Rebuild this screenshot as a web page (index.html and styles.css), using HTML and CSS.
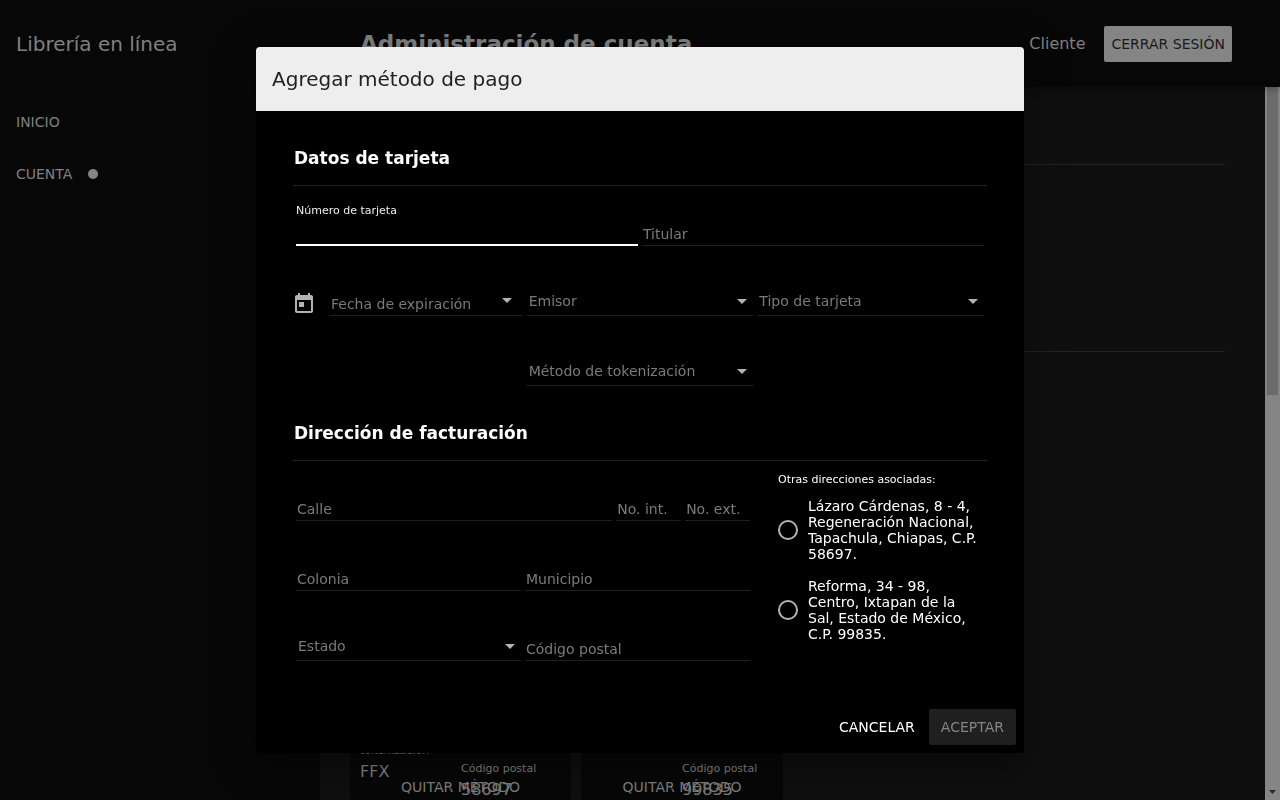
FILE: index.html
```html
<!DOCTYPE html>
<html lang="es">
<head>
<meta charset="utf-8">
<title>Librería en línea</title>
<link rel="stylesheet" href="styles.css">
</head>
<body>
<div class="app">
  <header class="topbar">
    <span class="brand">Librería en línea</span>
    <h1 class="page-title">Administración de cuenta</h1>
    <span class="role">Cliente</span>
    <button class="logout" type="button">CERRAR SESIÓN</button>
  </header>
  <div class="workspace">
    <nav class="sidebar">
      <a class="nav-link" href="#inicio">INICIO</a>
      <a class="nav-link" href="#cuenta">CUENTA <span class="dot"></span></a>
    </nav>
    <main class="content">
      <hr class="rule rule-first">
      <hr class="rule rule-second">
      <div class="cards">
        <article class="card">
          <div class="card-data">
            <div><p class="caption">tokenización</p><p class="value">FFX</p></div>
            <div class="postal"><p class="caption">Código postal</p><p class="value">58697</p></div>
          </div>
          <button class="remove" type="button">QUITAR MÉTODO</button>
        </article>
        <article class="card card-narrow">
          <div class="card-data">
            <div></div>
            <div class="postal"><p class="caption">Código postal</p><p class="value">99835</p></div>
          </div>
          <button class="remove" type="button">QUITAR MÉTODO</button>
        </article>
      </div>
    </main>
    <div class="scrollbar">
      <div class="thumb"></div>
      <svg class="scroll-arrow" width="7" height="4" viewBox="0 0 7 4"><path d="M0 0h7L3.500 4z"/></svg>
    </div>
  </div>
</div>

<div class="overlay">
  <form class="dialog" role="dialog" aria-labelledby="dialog-title">
    <h2 class="dialog-title" id="dialog-title">Agregar método de pago</h2>
    <div class="dialog-body">
      <h3 class="section-title">Datos de tarjeta</h3>
      <div class="rows">
        <div class="row halves first">
          <div class="field active"><label for="numero">Número de tarjeta</label><input id="numero" type="text"></div>
          <div class="field"><label for="titular">Titular</label><input id="titular" type="text"></div>
        </div>
        <div class="row thirds">
          <div class="date">
            <svg class="calendar" width="24" height="24" viewBox="0 0 24 24"><path d="M19 3h-1V1h-2v2H8V1H6v2H5c-1.110 0-1.990.9-1.990 2L3 19c0 1.100.890 2 2 2h14c1.100 0 2-.9 2-2V5c0-1.100-.9-2-2-2zm0 16H5V8h14v11zM7 10h5v5H7z"/></svg>
            <div class="field"><label for="fecha">Fecha de expiración</label><input id="fecha" type="text"><svg class="arrow" width="10" height="5" viewBox="0 0 10 5"><path d="M0 0h10L5 5z"/></svg></div>
          </div>
          <div class="field"><select aria-label="Emisor"><option>Emisor</option></select><svg class="arrow" width="10" height="5" viewBox="0 0 10 5"><path d="M0 0h10L5 5z"/></svg></div>
          <div class="field"><select aria-label="Tipo de tarjeta"><option>Tipo de tarjeta</option></select><svg class="arrow" width="10" height="5" viewBox="0 0 10 5"><path d="M0 0h10L5 5z"/></svg></div>
        </div>
        <div class="row thirds">
          <div class="field middle"><select aria-label="Método de tokenización"><option>Método de tokenización</option></select><svg class="arrow" width="10" height="5" viewBox="0 0 10 5"><path d="M0 0h10L5 5z"/></svg></div>
        </div>
      </div>
      <h3 class="section-title">Dirección de facturación</h3>
      <div class="billing">
        <div class="address">
          <div class="row street first">
            <div class="field"><label for="calle">Calle</label><input id="calle" type="text"></div>
            <div class="field"><label for="interior">No. int.</label><input id="interior" type="text"></div>
            <div class="field"><label for="exterior">No. ext.</label><input id="exterior" type="text"></div>
          </div>
          <div class="row halves">
            <div class="field"><label for="colonia">Colonia</label><input id="colonia" type="text"></div>
            <div class="field"><label for="municipio">Municipio</label><input id="municipio" type="text"></div>
          </div>
          <div class="row halves">
            <div class="field"><select aria-label="Estado"><option>Estado</option></select><svg class="arrow" width="10" height="5" viewBox="0 0 10 5"><path d="M0 0h10L5 5z"/></svg></div>
            <div class="field"><label for="postal">Código postal</label><input id="postal" type="text"></div>
          </div>
        </div>
        <fieldset class="others">
          <legend>Otras direcciones asociadas:</legend>
          <label class="option"><input type="radio" name="direccion"><span>Lázaro Cárdenas, 8 - 4, Regeneración Nacional, Tapachula, Chiapas, C.P. 58697.</span></label>
          <label class="option"><input type="radio" name="direccion"><span>Reforma, 34 - 98, Centro, Ixtapan de la Sal, Estado de México, C.P. 99835.</span></label>
        </fieldset>
      </div>
    </div>
    <footer class="actions">
      <button class="cancel" type="button">CANCELAR</button>
      <button class="accept" type="submit" disabled>ACEPTAR</button>
    </footer>
  </form>
</div>
</body>
</html>
```
FILE: styles.css
```css
* { box-sizing: border-box; }
body { margin: 0; background: #0f0f0f; color: #808080; font-family: "DejaVu Sans", sans-serif; font-size: 14px; }
h1, h2, h3, p { margin: 0; }
button, input, select { font: inherit; }
button { border: 0; border-radius: 2px; height: 36px; background: transparent; color: inherit; white-space: nowrap; }

.app { height: 100vh; display: flex; flex-direction: column; overflow: hidden; }
.topbar { display: flex; align-items: center; flex: 0 0 87px; padding: 0 48px 0 16px; background: #070707; box-shadow: 0 2px 8px rgba(0, 0, 0, .3); z-index: 1; }
.brand { width: 344px; font-size: 20px; }
.page-title { flex: 1; font-size: 23px; }
.role { font-size: 16px; margin-right: 19px; }
.logout { padding: 0 7px; background: #858585; color: #1a1a1a; }
.workspace { display: flex; flex: 1; min-height: 0; }
.sidebar { width: 25%; padding: 9px 16px; background: #070707; z-index: 1; }
.nav-link { display: flex; align-items: center; gap: 16px; height: 52px; color: inherit; text-decoration: none; }
.dot { width: 10px; height: 10px; border-radius: 50%; background: #858585; }
.content { flex: 1; min-width: 0; padding: 77px 40px 0 30px; overflow: hidden; }
.rule { height: 1px; margin: 0; border: 0; background: #232323; }
.rule-second { margin-top: 186px; }
.cards { display: flex; align-items: flex-start; gap: 10px; margin-top: 308px; }
.card { width: 221px; height: 300px; padding-top: 83px; background: #070707; }
.card-narrow { width: 202px; }
.card-data { display: grid; grid-template-columns: 101px 1fr; padding-left: 10px; }
.card-narrow .card-data { grid-template-columns: 91px 1fr; }
.caption { font-size: 11px; line-height: 16px; }
.value { font-size: 16px; line-height: 26px; }
.postal { padding-top: 18px; }
.remove { display: block; margin: -34px auto 0; }
.scrollbar { display: flex; flex-direction: column; justify-content: space-between; align-items: center; width: 15px; padding-bottom: 6px; background: #858585; }
.thumb { width: 11px; height: 308px; background: #6b6b6b; }
.scroll-arrow { fill: #2a2a2a; }

.overlay { position: fixed; inset: 0; z-index: 2; display: flex; align-items: center; justify-content: center; }
.dialog { width: 60%; border-radius: 4px; background: #000; box-shadow: 0 11px 15px -7px rgba(0, 0, 0, .2), 0 24px 38px 3px rgba(0, 0, 0, .14), 0 9px 46px 8px rgba(0, 0, 0, .12); }
.dialog-title { padding: 0 16px; border-radius: 4px 4px 0 0; background: #eee; color: #212121; font-size: 20px; font-weight: 400; line-height: 64px; }
.dialog-body { padding: 0 37px; }
.section-title { height: 75px; padding: 37px 1px 0; border-bottom: 1px solid #202020; color: #fff; font-size: 17px; line-height: 20px; }
.rows { padding: 0 3px; }
.row { display: grid; align-items: end; gap: 4px; height: 70px; }
.first { height: 60px; }
.halves { grid-template-columns: 1fr 1fr; }
.thirds { grid-template-columns: 1fr 1fr 1fr; }
.street { grid-template-columns: 317fr 65fr 65fr; }
.middle { grid-column: 2; }
.field { position: relative; min-width: 0; height: 30px; border-bottom: 1px solid #202020; color: #7a7a7a; }
.field label { position: absolute; left: 1px; top: 8px; line-height: 20px; white-space: nowrap; pointer-events: none; }
.field input { display: block; width: 100%; height: 100%; padding: 0 2px; border: 0; outline: 0; background: transparent; color: #fff; }
.field select { display: block; width: 100%; height: 100%; padding: 0 24px 0 2px; border: 0; outline: 0; appearance: none; background: transparent; color: inherit; }
.field, .option { font-size: 14px; }
.active { border-bottom: 2px solid #fff; color: #eee; }
.active label { left: 0; top: -15px; font-size: 11px; }
.arrow { position: absolute; right: 6px; top: 13px; fill: #b3b3b3; pointer-events: none; }
.date { display: flex; align-items: flex-end; gap: 14px; margin-left: -4px; }
.date .field { flex: 1; }
.date .arrow { right: 11px; top: 12px; }
.calendar { fill: #b3b3b3; }

.billing { display: grid; grid-template-columns: 454px 1fr; gap: 28px; padding-left: 3px; }
.others { min-width: 0; margin: 0; padding: 0; border: 0; color: #fff; }
.others legend { padding: 11px 0 10px; font-size: 11px; line-height: 16px; white-space: nowrap; }
.option { display: flex; align-items: center; gap: 10px; margin-bottom: 16px; padding-right: 8px; line-height: 16px; }
.option input { flex: none; width: 20px; height: 20px; margin: 0; appearance: none; border: 2px solid #b3b3b3; border-radius: 50%; }
.actions { display: flex; justify-content: flex-end; gap: 2px; padding: 48px 8px 8px; }
.actions button { padding: 0 12px; }
.cancel { color: #fff; }
.actions .accept { background: #1f1f1f; color: #858585; }
```
